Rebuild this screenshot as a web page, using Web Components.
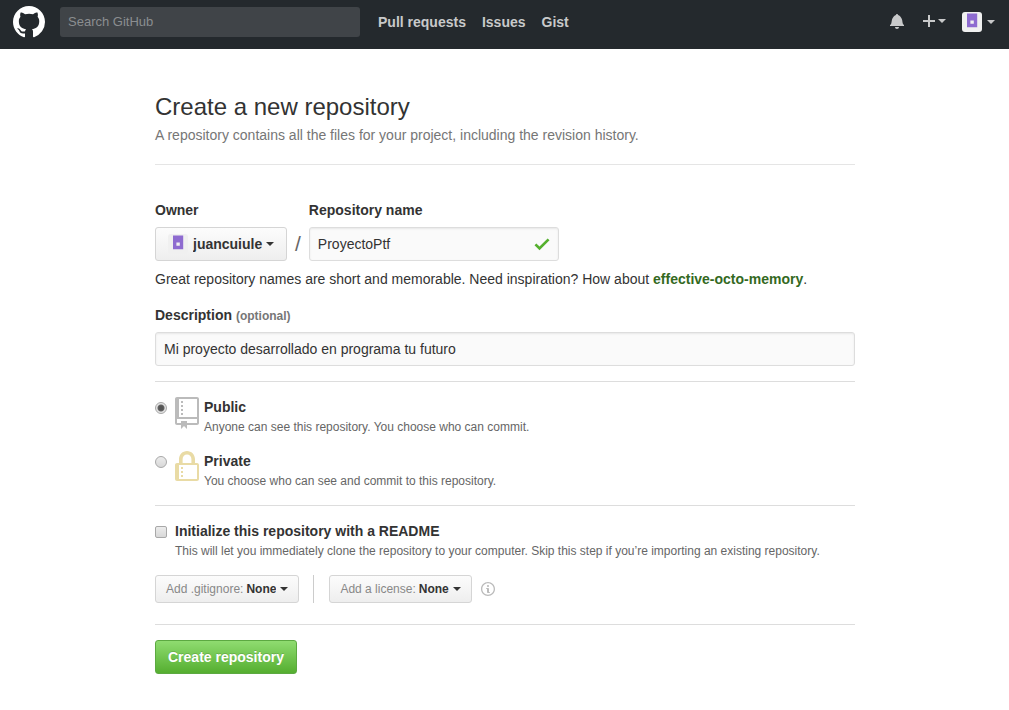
<!DOCTYPE html>
<html lang="en">
<head>
<meta charset="utf-8">
<title>Create a new repository</title>
<style>
  body { margin: 0; background: #fff; color: #333; font: 14px/20px "Liberation Sans", Arial, sans-serif; }
</style>
</head>
<body>
<site-header></site-header>
<new-repo-page></new-repo-page>

<script>
const ICONS = {
  mark: ['0 0 16 16', 'M8 0C3.58 0 0 3.58 0 8c0 3.54 2.29 6.53 5.47 7.59.4.07.55-.17.55-.38 0-.19-.01-.82-.01-1.49-2.01.37-2.53-.49-2.69-.94-.09-.23-.48-.94-.82-1.13-.28-.15-.68-.52-.01-.53.63-.01 1.08.58 1.23.82.72 1.21 1.87.87 2.33.66.07-.52.28-.87.51-1.07-1.78-.2-3.64-.89-3.64-3.95 0-.87.31-1.59.82-2.15-.08-.2-.36-1.02.08-2.12 0 0 .67-.21 2.2.82.64-.18 1.32-.27 2-.27.68 0 1.36.09 2 .27 1.53-1.04 2.2-.82 2.2-.82.44 1.1.16 1.92.08 2.12.51.56.82 1.27.82 2.15 0 3.07-1.87 3.75-3.65 3.95.29.25.54.73.54 1.48 0 1.07-.01 1.93-.01 2.2 0 .21.15.46.55.38A8.013 8.013 0 0 0 16 8c0-4.42-3.58-8-8-8z'],
  bell: ['0 0 14 16', 'M14 12v1H0v-1l.73-.58c.77-.77.81-2.55 1.19-4.42C2.69 3.23 6 2 6 2c0-.55.45-1 1-1s1 .45 1 1c0 0 3.39 1.23 4.16 5 .38 1.88.42 3.66 1.19 4.42l.66.58H14zm-7 4c1.11 0 2-.89 2-2H5c0 1.11.89 2 2 2z'],
  plus: ['0 0 12 16', 'M12 9H7v5H5V9H0V7h5V2h2v5h5z'],
  repo: ['0 0 12 16', 'M4 9H3V8h1v1zm0-3H3v1h1V6zm0-2H3v1h1V4zm0-2H3v1h1V2zm8-1v12c0 .55-.45 1-1 1H6v2l-1.5-1.5L3 16v-2H1c-.55 0-1-.45-1-1V1c0-.55.45-1 1-1h10c.55 0 1 .45 1 1zm-1 10H1v2h2v-1h3v1h5v-2zm0-10H2v9h9V1z'],
  lock: ['0 0 12 16', 'M4 13H3v-1h1v1zm8-6v7c0 .55-.45 1-1 1H1c-.55 0-1-.45-1-1V7c0-.55.45-1 1-1h1V4c0-2.2 1.8-4 4-4s4 1.8 4 4v2h1c.55 0 1 .45 1 1zM3.8 6h4.41V4c0-1.22-.98-2.2-2.2-2.2-1.22 0-2.2.98-2.2 2.2v2H3.8zM11 7H2v7h9V7zM4 8H3v1h1V8zm0 2H3v1h1v-1z'],
  check: ['0 0 12 16', 'M12 5l-8 8-4-4 1.5-1.5L4 10l6.5-6.5z'],
  info: ['0 0 14 16', 'M6.3 5.69a.942.942 0 0 1-.28-.7c0-.28.09-.52.28-.7.19-.18.42-.28.7-.28.28 0 .52.09.7.28.18.19.28.42.28.7 0 .28-.09.52-.28.7a1 1 0 0 1-.7.3c-.28 0-.52-.11-.7-.3zM8 7.99c-.02-.25-.11-.48-.31-.69-.2-.19-.42-.3-.69-.31H6c-.27.02-.48.13-.69.31-.2.2-.3.44-.31.69h1v3c.02.27.11.5.31.69.2.2.42.31.69.31h1c.27 0 .48-.11.69-.31.2-.19.3-.42.31-.69H8V7.98v.01zM7 2.3c-3.14 0-5.7 2.54-5.7 5.68 0 3.14 2.56 5.7 5.7 5.7s5.7-2.55 5.7-5.7c0-3.15-2.56-5.69-5.7-5.69v.01zM7 .98c3.86 0 7 3.14 7 7s-3.14 7-7 7-7-3.12-7-7 3.14-7 7-7z'],
  caret: ['0 0 8 4', 'M0 0h8L4 4z']
};

function define(name, css, html) {
  const template = document.createElement('template');
  template.innerHTML = `<style>*{box-sizing:border-box}${css}</style>${html}`;
  customElements.define(name, class extends HTMLElement {
    constructor() {
      super();
      this.attachShadow({ mode: 'open' }).append(template.content.cloneNode(true));
    }
  });
}

/* <octo-icon name="bell">: sized by its width and height on the host */
customElements.define('octo-icon', class extends HTMLElement {
  connectedCallback() {
    if (this.shadowRoot) return;
    const [box, path] = ICONS[this.getAttribute('name')];
    this.attachShadow({ mode: 'open' }).innerHTML = `
      <style>
        :host { display: block; flex: none; width: 14px; height: 16px; }
        :host([name="plus"]), :host([name="check"]) { width: 12px; }
        :host([name="caret"]) { width: 8px; height: 4px; }
        :host([name="mark"]) { width: 32px; height: 32px; }
        svg { display: block; width: 100%; height: 100%; fill: currentColor; }
      </style>
      <svg viewBox="${box}" aria-hidden="true"><path d="${path}"/></svg>`;
  }
});

define('user-avatar', `
  :host { display: block; flex: none; width: 20px; height: 20px; border-radius: 3px; overflow: hidden; background: #f0f0f0; }
  svg { display: block; }
`, `<svg width="20" height="20" viewBox="0 0 20 20" aria-hidden="true">
    <path fill="#8e6bd0" d="M5 1.6h10.2v13.6H5z"/><path fill="#f0f0f0" d="M8.4 8.4h3.4v3.4H8.4z"/>
  </svg>`);

define('site-header', `
  :host { display: block; background: #24292d; }
  header { display: flex; align-items: center; padding: 6px 14px 11px 13px; color: #c8c9ca; }
  a { color: inherit; text-decoration: none; }
  .home { color: #fff; }
  input { width: 300px; height: 30px; margin: 0 18px 0 15px; padding: 0 8px 2px; border: 0; border-radius: 3px; background: #404448; color: #fff; font: 13px "Liberation Sans", Arial, sans-serif; }
  input::placeholder { color: #8b8e90; opacity: 1; }
  nav { display: flex; gap: 16px; font-weight: bold; }
  .tools { display: flex; align-items: center; gap: 16px; margin-left: auto; }
  button { display: flex; align-items: center; gap: 3px; padding: 0; border: 0; background: none; color: inherit; }
  .bell { padding: 0 3px 2px 0; }
  .new { padding-bottom: 2px; }
  .profile { gap: 5px; }
`, `<header>
    <a class="home" href="#" aria-label="GitHub"><octo-icon name="mark"></octo-icon></a>
    <input type="search" placeholder="Search GitHub" aria-label="Search GitHub">
    <nav><a href="#">Pull requests</a><a href="#">Issues</a><a href="#">Gist</a></nav>
    <div class="tools">
      <a class="bell" href="#" aria-label="Notifications"><octo-icon name="bell"></octo-icon></a>
      <button class="new" type="button" aria-label="Create new"><octo-icon name="plus"></octo-icon><octo-icon name="caret"></octo-icon></button>
      <button class="profile" type="button" aria-label="Profile"><user-avatar></user-avatar><octo-icon name="caret"></octo-icon></button>
    </div>
  </header>`);

/* Drop-down drawn as a button; label text, picture and value come from its user */
customElements.define('menu-select', class extends HTMLElement {
  connectedCallback() {
    if (this.shadowRoot) return;
    this.attachShadow({ mode: 'open' }).innerHTML = `
      <style>
        * { box-sizing: border-box; }
        :host { display: block; }
        .title { display: block; margin-bottom: 7px; font-weight: bold; }
        .box { display: inline-flex; align-items: center; gap: 3px; height: 34px; padding: 0 12px; border: 1px solid #d5d5d5; border-radius: 3px; background: linear-gradient(#fcfcfc, #eee); font-size: 14px; }
        :host([small]) .box { display: flex; height: 28px; padding: 0 10px; gap: 3px; font-size: 12px; }
        .box label { color: #888; }
        select { appearance: none; margin: 0; padding: 0; border: 0; background: none; color: #333; font: inherit; font-weight: bold; }
        :host([small]) select { padding-right: 1px; }
        ::slotted(user-avatar) { margin-right: 2px; }
      </style>
      ${this.hasAttribute('heading') ? `<label class="title" for="s">${this.getAttribute('heading')}</label>` : ''}
      <div class="box"><slot></slot>${this.hasAttribute('label') ? `<label for="s">${this.getAttribute('label')}</label>` : ''}
      <select id="s"><option>${this.getAttribute('value')}</option></select><octo-icon name="caret"></octo-icon></div>`;
  }
});

/* Labelled text box; "valid" adds the green tick */
customElements.define('text-field', class extends HTMLElement {
  connectedCallback() {
    if (this.shadowRoot) return;
    const note = this.getAttribute('note');
    this.attachShadow({ mode: 'open' }).innerHTML = `
      <style>
        * { box-sizing: border-box; }
        :host { display: block; }
        label { display: block; margin-bottom: 7px; font-weight: bold; }
        small { color: #767676; font-size: 12px; line-height: 12px; }
        .wrap { display: grid; align-items: center; }
        input, octo-icon { grid-area: 1 / 1; }
        input { width: 100%; height: 34px; padding: 0 8px; border: 1px solid #ddd; border-radius: 3px; background: #fafafa; box-shadow: inset 0 1px 2px rgba(0,0,0,.075); color: #333; font: inherit; outline: 0; }
        octo-icon { justify-self: end; width: 16px; height: 20px; margin-right: 9px; color: #55b02e; }
      </style>
      <label for="t">${this.getAttribute('label')}${note ? ` <small>${note}</small>` : ''}</label>
      <div class="wrap"><input id="t" type="text" value="${this.getAttribute('value')}">${this.hasAttribute('valid') ? '<octo-icon name="check"></octo-icon>' : ''}</div>`;
  }
});

const CHOICE_CSS = `
  :host { display: block; }
  label { font-weight: bold; }
  p { margin: 1px 0 0; color: #666; font-size: 12px; line-height: 18px; }
  input { appearance: none; flex: none; width: 12px; height: 12px; margin: 5px 8px 0 0; border: 1px solid #a8a8a8; border-radius: 2px; background: linear-gradient(#ececec, #d8d8d8); }
`;

define('visibility-picker', `${CHOICE_CSS}
  :host { display: grid; gap: 15px; }
  .row { display: flex; align-items: flex-start; }
  .row div { display: flex; flex-direction: column; }
  input { border-radius: 50%; }
  input:checked { background: radial-gradient(circle, #555 0 2px, #666 3px, #e4e4e4 4px); }
  octo-icon { width: 24px; height: 32px; margin-right: 5px; color: #bbb; }
  .lock { color: #e9dba5; }
`, `<div class="row"><input type="radio" name="visibility" id="public" checked><octo-icon name="repo"></octo-icon>
      <div><label for="public">Public</label><p>Anyone can see this repository. You choose who can commit.</p></div></div>
    <div class="row"><input type="radio" name="visibility" id="private"><octo-icon class="lock" name="lock"></octo-icon>
      <div><label for="private">Private</label><p>You choose who can see and commit to this repository.</p></div></div>`);

define('readme-option', `${CHOICE_CSS}
  :host { display: flex; align-items: flex-start; }
`, `<input type="checkbox" id="readme">
    <div><label for="readme">Initialize this repository with a README</label>
    <p>This will let you immediately clone the repository to your computer. Skip this step if you’re importing an existing repository.</p></div>`);

define('submit-button', `
  :host { display: block; }
  button { height: 34px; padding: 0 12px; border: 1px solid #5ca941; border-radius: 3px; background: linear-gradient(#8fdc70, #55ae30); color: #fff; font: bold 14px "Liberation Sans", Arial, sans-serif; text-shadow: 0 -1px 0 rgba(0,0,0,.15); }
`, `<button type="submit"><slot></slot></button>`);

define('new-repo-page', `
  :host { display: block; padding: 40px 20px 36px 21px; }
  main { max-width: 700px; margin: 0 auto; }
  h1 { margin: 0; font-size: 24px; line-height: 36px; font-weight: normal; }
  .lead { margin: 0; color: #767676; }
  hr { margin: 15px 0; border: 0; border-top: 1px solid #ddd; }
  .top { margin: 19px 0 35px; border-color: #e5e5e5; }
  .names { display: flex; align-items: flex-end; gap: 8px; }
  .slash { font-size: 21px; line-height: 34px; color: #666; }
  .names text-field { width: 250px; }
  .hint { margin: 8px 0 16px; }
  .hint a { color: #33691e; font-weight: bold; text-decoration: none; }
  .setup { display: flex; align-items: center; margin: 15px 0 21px; }
  .bar { width: 1px; height: 28px; margin: 0 15px 0 14px; background: #ccc; }
  .setup octo-icon { margin-left: 9px; color: #bbb; }
`, `<main>
    <h1>Create a new repository</h1>
    <p class="lead">A repository contains all the files for your project, including the revision history.</p>
    <hr class="top">
    <form>
      <div class="names">
        <menu-select heading="Owner" value="juancuiule"><user-avatar></user-avatar></menu-select>
        <span class="slash">/</span>
        <text-field label="Repository name" value="ProyectoPtf" valid></text-field>
      </div>
      <p class="hint">Great repository names are short and memorable. Need inspiration? How about <a href="#">effective-octo-memory</a>.</p>
      <text-field label="Description" note="(optional)" value="Mi proyecto desarrollado en programa tu futuro"></text-field>
      <hr>
      <visibility-picker></visibility-picker>
      <hr>
      <readme-option></readme-option>
      <div class="setup">
        <menu-select small label="Add .gitignore:" value="None"></menu-select>
        <span class="bar"></span>
        <menu-select small label="Add a license:" value="None"></menu-select>
        <octo-icon name="info"></octo-icon>
      </div>
      <hr>
      <submit-button>Create repository</submit-button>
    </form>
  </main>`);
</script>
</body>
</html>
